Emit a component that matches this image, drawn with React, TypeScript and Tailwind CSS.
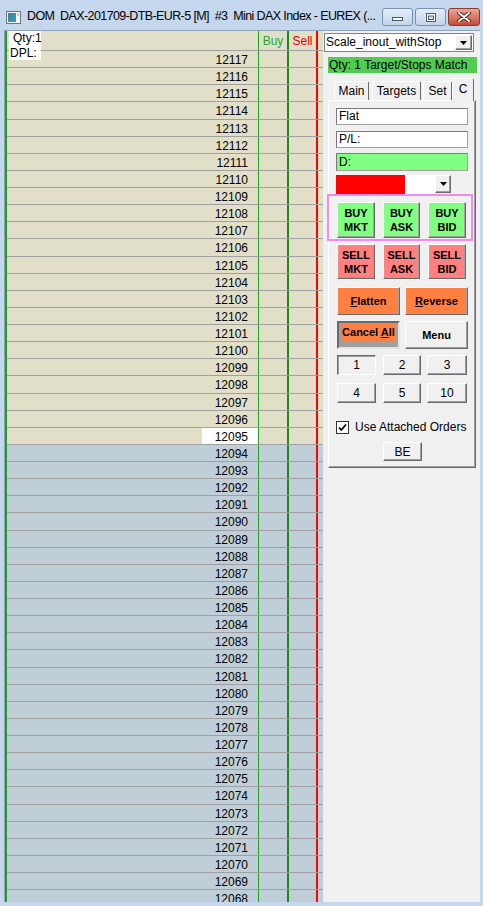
import React from "react";

const raised =
  "border border-t-white border-l-white border-r-[#696969] border-b-[#696969] shadow-[inset_-1px_-1px_0_#a0a0a0]";
const sunken =
  "border border-t-[#696969] border-l-[#696969] border-r-white border-b-white shadow-[inset_1px_1px_0_#a0a0a0]";

function TitleIcon() {
  return (
    <svg width="15" height="13" viewBox="0 0 15 13">
      <defs>
        <linearGradient id="ti" x1="0" y1="0" x2="1" y2="1">
          <stop offset="0" stopColor="#2f8f7f" />
          <stop offset="1" stopColor="#4a8fd0" />
        </linearGradient>
      </defs>
      <rect x="0.5" y="0.5" width="14" height="12" fill="#f4f6f8" stroke="#6a7686" />
      <rect x="2" y="2" width="8" height="9" fill="url(#ti)" />
      <rect x="11" y="2" width="2" height="3" fill="#c8d0d8" />
    </svg>
  );
}

function WinButtons() {
  return (
    <div className="shrink-0 mt-[8px] mr-[3px] flex gap-[2px]">
      <div className="w-[31px] h-[18px] rounded-[3px] border border-[#7890b0] bg-gradient-to-b from-[#e4edf8] to-[#c3d5ea] flex items-end justify-center pb-[4px]">
        <svg width="11" height="4" viewBox="0 0 11 4">
          <rect x="0.5" y="0.5" width="10" height="3" fill="#fff" stroke="#4a5a70" />
        </svg>
      </div>
      <div className="w-[31px] h-[18px] rounded-[3px] border border-[#7890b0] bg-gradient-to-b from-[#e4edf8] to-[#c3d5ea] flex items-center justify-center">
        <svg width="10" height="9" viewBox="0 0 10 9">
          <rect x="0.5" y="0.5" width="9" height="8" fill="#fff" stroke="#4a5a70" />
          <rect x="2.5" y="3" width="5" height="3.5" fill="#d7e2ef" stroke="#4a5a70" />
        </svg>
      </div>
      <div className="w-[32px] h-[18px] rounded-[3px] border border-[#8e3a2c] bg-gradient-to-b from-[#e8a898] to-[#c44a36] flex items-center justify-center">
        <svg width="14" height="10" viewBox="0 0 14 10">
          <path d="M2 1 L12 9 M12 1 L2 9" stroke="#5a2018" strokeWidth="4" strokeLinecap="round" />
          <path d="M2 1 L12 9 M12 1 L2 9" stroke="#ffffff" strokeWidth="2" strokeLinecap="round" />
        </svg>
      </div>
    </div>
  );
}

function DropArrow() {
  return (
    <svg width="7" height="4" viewBox="0 0 7 4">
      <path d="M0 0 L7 0 L3.5 4 Z" fill="#000" />
    </svg>
  );
}

function Grid() {
  const prices = Array.from({ length: 50 }, (_, i) => 12117 - i);
  return (
    <div className="relative w-[318px] h-full overflow-hidden border-l-2 border-[#1f9f1f] bg-[#c0cfd7]">
      <div className="flex h-[20px] shrink-0 bg-[#e1dfc8] border-b border-[#a0a0a0]">
        <div className="w-[252px] border-r border-[#1fa01f]" />
        <div className="w-[30px] border-r-2 border-[#178a17] text-center text-[#2aa82a] leading-[20px]">Buy</div>
        <div className="w-[29px] border-r-2 border-[#ff0000] text-center text-[#e00000] leading-[20px]">Sell</div>
      </div>
      {prices.map((p) => (
        <div
          key={p}
          className={
            p >= 12095
              ? "flex h-[17.14px] shrink-0 border-b border-[#a0a0a0] bg-[#e1dfc8]"
              : "flex h-[17.14px] shrink-0 border-b border-[#a0a0a0] bg-[#c0cfd7]"
          }
        >
          <div className="w-[252px] border-r border-[#1fa01f] flex justify-end">
            {p === 12095 ? (
              <span className="w-[56px] h-full bg-white text-right pr-[10px] pt-[1px] leading-[16px]">{p}</span>
            ) : (
              <span className="pr-[10px] pt-[1px] leading-[16px]">{p}</span>
            )}
          </div>
          <div className="w-[30px] border-r-2 border-[#178a17]" />
          <div className="w-[29px] border-r-2 border-[#ff0000]" />
        </div>
      ))}
      <div className="absolute left-[2px] top-0 w-[32px] h-[29px] bg-white flex flex-col leading-[15px] pt-0">
        <span className="pl-[4px]">Qty:1</span>
        <span className="pl-[1px]">DPL:</span>
      </div>
    </div>
  );
}

function Btn({
  className,
  children,
}: {
  className: string;
  children: React.ReactNode;
}) {
  return (
    <div className={"flex flex-col items-center justify-center text-center " + className}>{children}</div>
  );
}

function Panel() {
  return (
    <div className="w-[157px] h-full bg-[#f0f0f0] flex flex-col">
      <div className="mt-[2px] ml-[1px] w-[150px] h-[19px] bg-white border border-[#828282] flex items-center">
        <span className="pl-[1px] flex-1 leading-[15px] whitespace-nowrap">Scale_inout_withStop</span>
        <div className={"w-[17px] h-[15px] mr-[1px] bg-[#f0f0f0] flex items-center justify-center " + raised}>
          <DropArrow />
        </div>
      </div>
      <div className="mt-[5px] ml-[5px] w-[149px] h-[16px] bg-[#50cd50] pl-[1px] leading-[16px] whitespace-nowrap">
        Qty: 1 Target/Stops Match
      </div>
      <div className="mt-[5px] ml-[11px] h-[22px] flex items-end relative z-10">
        <div className={"w-[35px] h-[19px] text-center leading-[18px] rounded-t-[2px] border border-b-0 border-t-white border-l-white border-r-[#696969]"}>Main</div>
        <div className={"ml-[3px] w-[49px] h-[19px] text-center leading-[18px] rounded-t-[2px] border border-b-0 border-t-white border-l-white border-r-[#696969]"}>Targets</div>
        <div className={"ml-[2px] w-[29px] h-[19px] text-center leading-[18px] rounded-t-[2px] border border-b-0 border-t-white border-l-white border-r-[#696969]"}>Set</div>
        <div className={"w-[22px] h-[23px] -mb-[1px] bg-[#f0f0f0] text-center leading-[20px] rounded-t-[2px] border border-b-0 border-t-white border-l-white border-r-[#696969]"}>C</div>
      </div>
      <div className={"ml-[5px] w-[148px] h-[368px] flex flex-col " + raised}>
        <div className="mt-[7px] ml-[7px] w-[132px] h-[17px] bg-white border border-[#a0a0a0] border-t-[#7a7a7a] border-l-[#7a7a7a] pl-[2px] leading-[15px]">Flat</div>
        <div className="mt-[6px] ml-[7px] w-[132px] h-[17px] bg-white border border-[#a0a0a0] border-t-[#7a7a7a] border-l-[#7a7a7a] pl-[2px] leading-[15px]">P/L:</div>
        <div className="mt-[5px] ml-[7px] w-[132px] h-[18px] bg-[#80ff80] border border-[#a0a0a0] border-t-[#7a7a7a] border-l-[#7a7a7a] pl-[2px] leading-[16px]">D:</div>
        <div className="mt-[4px] ml-[7px] w-[115px] h-[19px] flex">
          <div className="w-[69px] h-full bg-[#ff0000]" />
          <div className="w-[30px] h-full bg-white" />
          <div className={"w-[16px] h-[18px] bg-[#f0f0f0] flex items-center justify-center " + raised}>
            <DropArrow />
          </div>
        </div>
        <div className="-ml-[2px] w-[146px] h-[47px] border-2 border-[#f08cf0] flex gap-[8px] pl-[8px] pt-[6px]">
          <Btn className={"w-[38px] h-[36px] bg-[#80ff80] font-bold text-[11px] leading-[14px] " + raised}>
            <span>BUY</span>
            <span>MKT</span>
          </Btn>
          <Btn className={"w-[37px] h-[36px] bg-[#80ff80] font-bold text-[11px] leading-[14px] " + raised}>
            <span>BUY</span>
            <span>ASK</span>
          </Btn>
          <Btn className={"w-[38px] h-[36px] bg-[#80ff80] font-bold text-[11px] leading-[14px] " + raised}>
            <span>BUY</span>
            <span>BID</span>
          </Btn>
        </div>
        <div className="mt-[3px] ml-[8px] flex gap-[8px]">
          <Btn className={"w-[38px] h-[35px] bg-[#ff8080] font-bold text-[11px] leading-[14px] " + raised}>
            <span>SELL</span>
            <span>MKT</span>
          </Btn>
          <Btn className={"w-[37px] h-[35px] bg-[#ff8080] font-bold text-[11px] leading-[14px] " + raised}>
            <span>SELL</span>
            <span>ASK</span>
          </Btn>
          <Btn className={"w-[38px] h-[35px] bg-[#ff8080] font-bold text-[11px] leading-[14px] " + raised}>
            <span>SELL</span>
            <span>BID</span>
          </Btn>
        </div>
        <div className="mt-[8px] ml-[8px] flex gap-[5px]">
          <Btn className={"w-[63px] h-[28px] bg-[#ff8040] font-bold text-[11px] " + raised}>
            <span>
              <span className="underline">F</span>latten
            </span>
          </Btn>
          <Btn className={"w-[63px] h-[28px] bg-[#ff8040] font-bold text-[11px] " + raised}>
            <span>
              <span className="underline">R</span>everse
            </span>
          </Btn>
        </div>
        <div className="mt-[6px] ml-[8px] flex gap-[5px]">
          <div className="w-[63px] h-[28px] bg-[#a0a0a0] border-2 border-t-[#696969] border-l-[#696969] border-r-[#e3e3e3] border-b-[#e3e3e3] flex justify-center pt-[1px]">
            <span className="h-[17px] bg-[#ff8040] px-[1px] font-bold text-[11px] leading-[17px] whitespace-nowrap">
              Cancel <span className="underline">A</span>ll
            </span>
          </div>
          <Btn className={"w-[63px] h-[28px] bg-[#f0f0f0] font-bold text-[11px] " + raised}>
            <span>Menu</span>
          </Btn>
        </div>
        <div className="mt-[6px] ml-[8px] flex">
          <Btn className={"w-[39px] h-[20px] bg-[#f0f0f0] text-[12px] " + sunken}>1</Btn>
          <Btn className={"ml-[7px] w-[38px] h-[20px] bg-[#f0f0f0] text-[12px] " + raised}>2</Btn>
          <Btn className={"ml-[6px] w-[40px] h-[20px] bg-[#f0f0f0] text-[12px] " + raised}>3</Btn>
        </div>
        <div className="mt-[8px] ml-[8px] flex">
          <Btn className={"w-[39px] h-[20px] bg-[#f0f0f0] text-[12px] " + raised}>4</Btn>
          <Btn className={"ml-[7px] w-[38px] h-[20px] bg-[#f0f0f0] text-[12px] " + raised}>5</Btn>
          <Btn className={"ml-[6px] w-[40px] h-[20px] bg-[#f0f0f0] text-[12px] " + raised}>10</Btn>
        </div>
        <div className="mt-[18px] ml-[7px] flex items-center h-[13px]">
          <div className="w-[13px] h-[13px] bg-white border border-[#333] flex items-center justify-center">
            <svg width="9" height="9" viewBox="0 0 9 9">
              <path d="M1 4.5 L3.3 7 L8 1.5" stroke="#000" strokeWidth="1.8" fill="none" />
            </svg>
          </div>
          <span className="ml-[6px] whitespace-nowrap leading-[13px]">Use Attached Orders</span>
        </div>
        <Btn className={"mt-[8px] ml-[54px] w-[39px] h-[19px] bg-[#f0f0f0] text-[12px] " + raised}>BE</Btn>
      </div>
    </div>
  );
}

export default function App() {
  return (
    <div className="w-[483px] h-[906px] bg-[#c4d7ec] flex flex-col overflow-hidden font-['Liberation_Sans',Arial,sans-serif] text-[12px] text-black select-none">
      <div className="h-[30px] shrink-0 flex items-start">
        <div className="shrink-0 mt-[11px] ml-[6px]">
          <TitleIcon />
        </div>
        <div className="flex-1 min-w-0 overflow-hidden ml-[6px] mt-[9px] leading-[15px] whitespace-pre text-black text-[12.5px] tracking-[-0.6px]">
          {"DOM  DAX-201709-DTB-EUR-5 [M]  #3  Mini DAX Index - EUREX (..."}
        </div>
        <WinButtons />
      </div>
      <div className="flex-1 min-h-0 flex pl-[4px] pr-[3px] pb-[4px]">
        <div className="flex-1 min-h-0 flex border-l border-t border-[#8ea2bc]">
          <Grid />
          <Panel />
        </div>
      </div>
    </div>
  );
}
